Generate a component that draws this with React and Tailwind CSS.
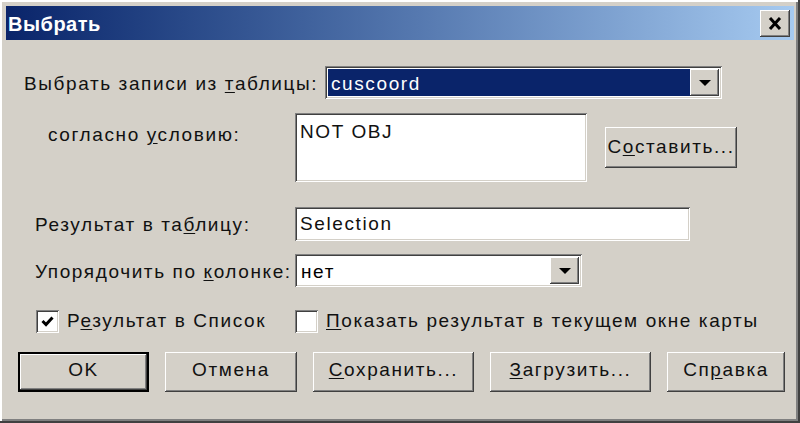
import React from "react";

const raised =
  "bg-[#d4d0c8] shadow-[inset_-1px_-1px_0_#404040,inset_1px_1px_0_#ffffff,inset_-2px_-2px_0_#808080,inset_2px_2px_0_#d4d0c8]";
const sunken =
  "bg-white shadow-[inset_1px_1px_0_#808080,inset_-1px_-1px_0_#ffffff,inset_2px_2px_0_#404040,inset_-2px_-2px_0_#d4d0c8]";

const Arrow = () => (
  <svg width="14" height="8" viewBox="0 0 14 8">
    <path d="M1 1 L13 1 L7 7 Z" fill="#000" />
  </svg>
);

const Combo = ({ width, value, selected }) => (
  <div className={`${sunken} flex h-[33px] p-[3px]`} style={{ width }}>
    <div
      className={`flex-1 flex items-center pl-[3px] pt-[3px] ${
        selected ? "bg-[#0a246a] text-white" : "text-black"
      }`}
    >
      {value}
    </div>
    <div className={`${raised} w-[29px] flex items-center justify-center`}>
      <Arrow />
    </div>
  </div>
);

const Check = ({ checked }) => (
  <div className={`${sunken} w-[23px] h-[23px] flex items-center justify-center`}>
    {checked && (
      <svg width="13" height="11" viewBox="0 0 13 11">
        <path d="M1.5 5 L5 8.5 L11.5 1.5" stroke="#000" strokeWidth="3" fill="none" />
      </svg>
    )}
  </div>
);

const Button = ({ width, children, isDefault }) => (
  <div
    className={`h-[40px] flex items-center justify-center ${
      isDefault ? "border-2 border-black" : ""
    }`}
    style={{ width }}
  >
    <div className={`${raised} w-full h-full flex items-center justify-center pb-[2px]`}>
      {children}
    </div>
  </div>
);

export default function App() {
  return (
    <div
      className="w-[800px] h-[423px] bg-[#d4d0c8] p-[6px] text-[19px] tracking-[1.6px] text-[#111] shadow-[inset_-2px_-2px_0_#404040,inset_2px_2px_0_#ffffff,inset_-4px_-4px_0_#808080]"
      style={{ fontFamily: '"Liberation Sans", Arial, sans-serif' }}
    >
      <div className="h-[34px] bg-gradient-to-r from-[#0a246a] to-[#a6caf0] flex items-center justify-between pl-[2px] pr-[4px]">
        <span className="text-white font-bold text-[20px] tracking-[0.5px] pt-[1px]">Выбрать</span>
        <div className={`${raised} w-[30px] h-[27px] flex items-center justify-center`}>
          <svg width="14" height="13" viewBox="0 0 14 13">
            <path d="M2 1 L12 12 M12 1 L2 12" stroke="#000" strokeWidth="3" />
          </svg>
        </div>
      </div>

      <div className="flex items-center mt-[26px]">
        <div className="w-[319px] pl-[18px] pt-[4px]">
          Выбрать записи из <u className="underline-offset-2">т</u>аблицы:
        </div>
        <Combo width={397} value="cuscoord" selected />
      </div>

      <div className="flex items-start mt-[14px]">
        <div className="w-[289px] pl-[42px] pt-[8px]">
          согласно <u className="underline-offset-2">у</u>словию:
        </div>
        <div className={`${sunken} w-[292px] h-[69px] pl-[5px] pt-[5px]`}>NOT OBJ</div>
        <div className="ml-[18px] mt-[14px]">
          <div className={`${raised} w-[132px] h-[41px] flex items-center justify-center`}>
            <span>
              С<u className="underline-offset-2">о</u>ставить...
            </span>
          </div>
        </div>
      </div>

      <div className="flex items-center mt-[25px]">
        <div className="w-[289px] pl-[29px] pt-[2px]">
          Результат в та<u className="underline-offset-2">б</u>лицу:
        </div>
        <div className={`${sunken} w-[395px] h-[34px] flex items-center pl-[5px]`}>Selection</div>
      </div>

      <div className="flex items-center mt-[13px]">
        <div className="w-[289px] pl-[29px] pt-[4px]">
          Упорядочить по <u className="underline-offset-2">к</u>олонке:
        </div>
        <Combo width={287} value="нет" />
      </div>

      <div className="flex items-center mt-[20px]">
        <div className="w-[289px] pl-[30px] flex items-center gap-[8px]">
          <Check checked />
          <span>
            Р<u className="underline-offset-2">е</u>зультат в Список
          </span>
        </div>
        <div className="flex items-center gap-[8px]">
          <Check />
          <span>
            <u className="underline-offset-2">П</u>оказать результат в текущем окне карты
          </span>
        </div>
      </div>

      <div className="flex items-center mt-[16px] pl-[12px] gap-[16px]">
        <Button width={131} isDefault>
          OK
        </Button>
        <Button width={132}>Отмена</Button>
        <Button width={161}>
          <span>
            <u className="underline-offset-2">С</u>охранить...
          </span>
        </Button>
        <Button width={161}>
          <span>
            <u className="underline-offset-2">З</u>агрузить...
          </span>
        </Button>
        <Button width={118}>
          <span>
            Сп<u className="underline-offset-2">р</u>авка
          </span>
        </Button>
      </div>
    </div>
  );
}
